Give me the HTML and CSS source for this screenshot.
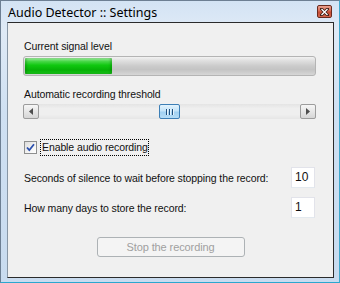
FILE: index.html
```html
<!DOCTYPE html>
<html>
<head>
<meta charset="utf-8">
<link rel="stylesheet" href="styles.css">
</head>
<body>
<div class="window">
  <div class="titlebar">
    <span class="title">Audio Detector :: Settings</span>
    <span class="close">
      <svg width="9" height="8" viewBox="0 0 9 8"><path d="M1.5 1 L7.5 7 M7.5 1 L1.5 7" stroke="#3a1a12" stroke-width="3" stroke-linecap="square"/><path d="M1.5 1 L7.5 7 M7.5 1 L1.5 7" stroke="#ffffff" stroke-width="1.4"/></svg>
    </span>
  </div>
  <div class="client">
    <div class="label">Current signal level</div>
    <div class="progress"><div class="fill" style="width:87px"></div></div>
    <div class="label label2">Automatic recording threshold</div>
    <div class="scroll">
      <span class="sbtn"><svg width="4" height="7" viewBox="0 0 4 7"><path d="M4 0 L0 3.5 L4 7 Z" fill="#4d4d4d"/></svg></span>
      <span class="track">
        <span class="thumb"><span class="grip"></span><span class="grip"></span><span class="grip"></span></span>
      </span>
      <span class="sbtn"><svg width="4" height="7" viewBox="0 0 4 7"><path d="M0 0 L4 3.5 L0 7 Z" fill="#4d4d4d"/></svg></span>
    </div>
    <div class="checkrow">
      <span class="checkbox"><svg width="13" height="13" viewBox="0 0 13 13"><path d="M3 6.5 L5.3 9.2 L10 3.2" fill="none" stroke="#2a4fae" stroke-width="1.8"/></svg></span>
      <span class="focus">Enable audio recording</span>
    </div>
    <div class="row row1">
      <span class="rlabel">Seconds of silence to wait before stopping the record:</span>
      <span class="edit">10</span>
    </div>
    <div class="row row2">
      <span class="rlabel">How many days to store the record:</span>
      <span class="edit">1</span>
    </div>
    <div class="btnrow"><span class="button">Stop the recording</span></div>
  </div>
</div>
</body>
</html>
```
FILE: styles.css
```css
html, body { margin: 0; padding: 0; }
body { width: 340px; height: 283px; overflow: hidden; background: #ffffff; }
.window {
  box-sizing: border-box;
  width: 340px; height: 283px;
  background: linear-gradient(180deg, #d3e3f4 0%, #dfeaf6 10%, #cfe0f2 40%, #c8dbef 100%);
  border: 1px solid #6d7f93;
  border-bottom-color: #2ba7cf;
  border-right-color: #3fa8cc;
  display: flex; flex-direction: column;
}
.titlebar {
  height: 21px;
  display: flex; align-items: center; justify-content: space-between;
  padding: 0 7px 0 7px;
}
.title {
  font-family: "Noto Sans", "Open Sans", sans-serif;
  font-size: 12.5px; color: #000;
  padding-top: 2px;
}
.close {
  box-sizing: border-box;
  width: 15px; height: 13px;
  border: 1px solid #6a2a1e; border-radius: 2px;
  background: linear-gradient(180deg, #e8a08f 0%, #d86a52 45%, #c54b32 55%, #d4674d 100%);
  display: flex; align-items: center; justify-content: center;
}
.client {
  box-sizing: border-box;
  margin: 0 5px 0 6px;
  height: 256px;
  background: #f0f0f0;
  border: 1px solid #2b2b2b;
  border-left-color: #8796a5;
  padding: 17px 17px 0 15px;
  font-family: "Liberation Sans", Arial, sans-serif;
  font-size: 10.5px; letter-spacing: -0.1px; color: #111;
  display: flex; flex-direction: column;
}
.label { line-height: 13px; height: 13px; padding-left: 1px; }
.label2 { margin-top: 12px; }
.progress {
  box-sizing: border-box;
  margin-top: 3px; height: 20px;
  border: 1px solid #b4b4b4; border-radius: 3px;
  background: linear-gradient(180deg, #f2f2f2 0%, #e0e0e0 20%, #cbcbcb 50%, #c4c4c4 70%, #d6d6d6 100%);
  padding: 1px;
}
.fill {
  height: 100%; border-radius: 1px;
  background: linear-gradient(180deg, #a8efa8 0%, #4ad84a 20%, #10c810 45%, #06b006 75%, #1cc41c 100%);
  box-shadow: inset 2px 0 2px rgba(0,90,0,0.25), inset -2px 0 2px rgba(0,90,0,0.25);
}
.scroll {
  margin-top: 3px; height: 15px;
  display: flex;
  background: #e9e9e9;
}
.sbtn {
  box-sizing: border-box;
  width: 16px; height: 15px; flex: none;
  border: 1px solid #9c9c9c; border-radius: 2px;
  background: linear-gradient(180deg, #f6f6f6 0%, #e6e6e6 50%, #d6d6d6 100%);
  display: flex; align-items: center; justify-content: center;
}
.track {
  flex: 1;
  background: linear-gradient(180deg, #e4e4e4 0%, #efefef 30%, #efefef 70%, #e6e6e6 100%);
  display: flex; align-items: stretch;
}
.thumb {
  box-sizing: border-box;
  margin-left: 120px;
  width: 21px; height: 15px;
  border: 1px solid #3d7fb6; border-radius: 2px;
  background: linear-gradient(180deg, #e3f3fd 0%, #c4e4f9 45%, #a1d1f2 55%, #b5dcf6 100%);
  display: flex; align-items: center; justify-content: center; gap: 1px;
}
.grip { width: 1px; height: 6px; background: #1f4f7e; border-right: 1px solid #e6f4fd; }
.checkrow {
  margin-top: 20px; height: 17px;
  display: flex; align-items: center;
}
.checkbox {
  box-sizing: border-box;
  width: 13px; height: 13px; margin-left: 1px;
  border: 1px solid #8e8f8f;
  background: linear-gradient(135deg, #dcdcdc 0%, #f4f4f4 60%, #ffffff 100%);
  display: flex;
}
.checkbox svg { margin: -1px; }
.focus {
  margin-left: 3px;
  border: 1px dotted #000;
  padding: 1px 0 1px 1px;
  line-height: 13px;
}
.row { display: flex; align-items: center; justify-content: space-between; height: 21px; }
.row1 { margin-top: 11px; }
.row2 { margin-top: 9px; }
.rlabel { padding-left: 1px; }
.edit {
  box-sizing: border-box;
  width: 24px; height: 21px; margin-right: 1px;
  background: #fff;
  border: 1px solid #e2e3ea; border-bottom-color: #e3e9ef;
  padding: 3px 0 0 3px;
  font-size: 12px; line-height: 13px; letter-spacing: 0;
}
.btnrow { margin-top: 19px; display: flex; justify-content: center; padding-left: 2px; }
.button {
  box-sizing: border-box;
  width: 148px; height: 20px;
  border: 1px solid #adb2b5; border-radius: 3px;
  background: #f4f4f4;
  color: #a0a0a0;
  display: flex; align-items: center; justify-content: center;
  font-size: 11px;
}
```
